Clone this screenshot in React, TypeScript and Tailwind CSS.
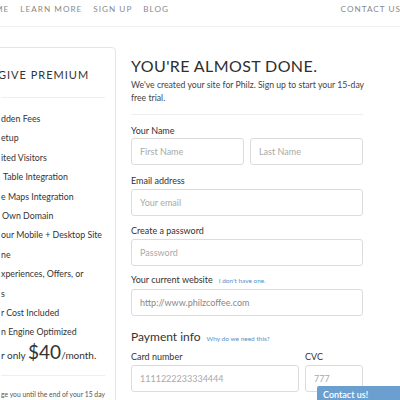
import React from "react";

const items = [
  { t: "dden Fees", ml: "ml-0" },
  { t: "etup", ml: "ml-0" },
  { t: "ited Visitors", ml: "ml-0" },
  { t: "Table Integration", ml: "ml-[2px]" },
  { t: "e Maps Integration", ml: "ml-0" },
  { t: "Own Domain", ml: "ml-[1px]" },
  { t: "our Mobile + Desktop Site", ml: "ml-0" },
  { t: "ne", ml: "ml-0" },
  { t: "xperiences, Offers, or", ml: "ml-0" },
  { t: "s", ml: "ml-0" },
  { t: "r Cost Included", ml: "ml-0" },
  { t: "n Engine Optimized", ml: "ml-0" },
];

function Field({ placeholder, className }: { placeholder: string; className: string }) {
  return (
    <div
      className={`h-[27px] border border-[#dcdcdc] rounded-[3px] bg-white flex items-center px-[8px] text-[9px] text-[#a9a9a9] ${className}`}
    >
      {placeholder}
    </div>
  );
}

export default function App() {
  return (
    <div className="w-[400px] h-[400px] overflow-hidden bg-white relative font-['Lato',sans-serif] text-[#333]">
      {/* Nav */}
      <div className="h-[27px] border-b border-[#f0f0f0] flex items-start justify-between pt-[4px] text-[8.2px] leading-[10px] tracking-[1px] text-[#8a8a8a]">
        <div className="flex items-center gap-[11px] -ml-[5px]">
          <span>ME</span>
          <span>LEARN MORE</span>
          <span>SIGN UP</span>
          <span>BLOG</span>
        </div>
        <span className="-mr-[1px]">CONTACT US</span>
      </div>

      <div className="flex">
        {/* Left panel */}
        <div className="mt-[20px] -ml-[10px] w-[126px] h-[400px] border border-[#e6e6e6] rounded-tr-[4px] pl-[10px] shrink-0 overflow-hidden">
          <div className="h-[49px] flex items-center justify-start text-[11px] tracking-[1px] text-[#333] whitespace-nowrap -ml-[3px] pt-[6px]">
            GIVE PREMIUM
          </div>
          <div className="border-t border-[#eeeeee] mr-[10px]" />
          <div className="pt-[11px] text-[8.8px] leading-[19.4px] text-[#333] whitespace-nowrap">
            {items.map((it, i) => (
              <div key={i} className={it.ml}>
                {it.t}
              </div>
            ))}
          </div>
          <div className="mt-0 flex items-baseline whitespace-nowrap text-[10px] text-[#333]">
            <span>r only&nbsp;</span>
            <span className="text-[19px] leading-[20px]">$40</span>
            <span>/month.</span>
          </div>
          <div className="mt-[12px] border-t border-[#eeeeee] mr-[10px]" />
          <div className="mt-[13px] text-[6.8px] leading-[10px] text-[#555] whitespace-nowrap">
            <div>ge you until the end of your 15 day</div>
            <div className="ml-[37px]">trial period.</div>
          </div>
        </div>

        {/* Right form */}
        <div className="ml-[15px] w-[232px] flex flex-col">
          <h1 className="mt-[29px] text-[16px] leading-[20px] tracking-[0.4px] text-[#2e2e2e] whitespace-nowrap">
            YOU&apos;RE ALMOST DONE.
          </h1>
          <p className="mt-[2px] text-[8.7px] leading-[13px] text-[#444] whitespace-nowrap">
            We&apos;ve created your site for Philz. Sign up to start your 15-day
            <br />
            free trial.
          </p>
          <div className="mt-[10px] border-t border-[#eeeeee]" />

          <label className="mt-[10px] text-[9px] leading-[12px] text-[#333]">Your Name</label>
          <div className="mt-[1px] flex gap-[6px]">
            <Field placeholder="First Name" className="w-[113px]" />
            <Field placeholder="Last Name" className="w-[113px]" />
          </div>

          <label className="mt-[10px] text-[9px] leading-[12px] text-[#333]">Email address</label>
          <Field placeholder="Your email" className="mt-[2px] w-[232px]" />

          <label className="mt-[9px] text-[9px] leading-[12px] text-[#333]">Create a password</label>
          <Field placeholder="Password" className="mt-[2px] w-[232px]" />

          <div className="mt-[8px] flex items-baseline gap-[6px] leading-[12px] whitespace-nowrap">
            <span className="text-[9px] text-[#333]">Your current website</span>
            <span className="text-[6.5px] text-[#5b8fc4]">I don&apos;t have one.</span>
          </div>
          <Field placeholder="http://www.philzcoffee.com" className="mt-[2px] w-[232px] !text-[#888]" />

          <div className="mt-[13px] flex items-baseline gap-[6px] leading-[16px] whitespace-nowrap">
            <span className="text-[12px] text-[#333]">Payment info</span>
            <span className="text-[6.5px] text-[#5b8fc4]">Why do we need this?</span>
          </div>

          <div className="mt-[4px] flex gap-[6px]">
            <div className="flex flex-col">
              <label className="text-[9px] leading-[12px] text-[#333]">Card number</label>
              <Field placeholder="1111222233334444" className="mt-[2px] w-[168px]" />
            </div>
            <div className="flex flex-col">
              <label className="text-[9px] leading-[12px] text-[#333]">CVC</label>
              <Field placeholder="777" className="mt-[2px] w-[58px]" />
            </div>
          </div>
        </div>
      </div>

      {/* Contact overlay */}
      <div className="absolute left-[317px] top-[386px] w-[90px] h-[20px] bg-[#6b9fcf] rounded-tl-[2px] text-white text-[9px] pl-[6px] pt-[2px] font-semibold">
        Contact us!
      </div>
    </div>
  );
}
